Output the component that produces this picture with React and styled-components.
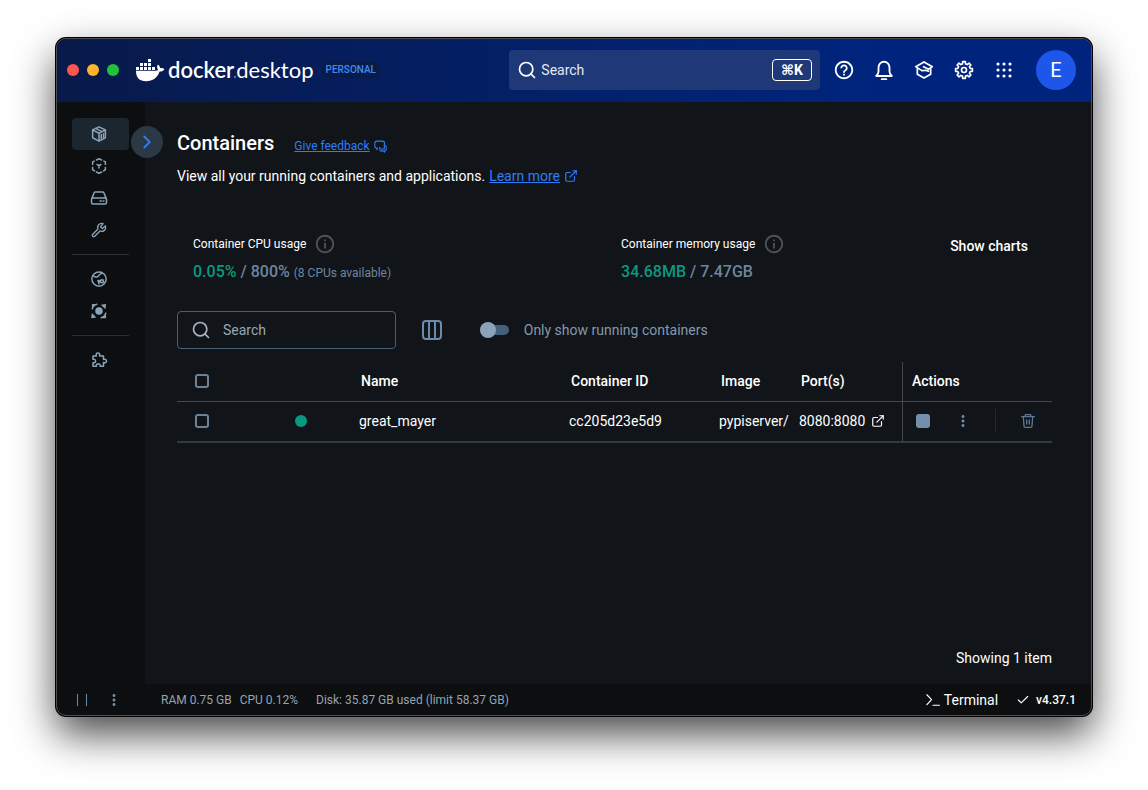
import React from 'react'
import { useState } from 'react'
import styled, { createGlobalStyle } from 'styled-components'
import { Search, Wrench, Check, ChevronRight, ExternalLink } from 'lucide-react'
import { MdHelpOutline, MdInfoOutline, MdMoreVert } from 'react-icons/md'

const containers = [
    { name: 'great_mayer', id: 'cc205d23e5d9', image: 'pypiserver/', ports: '8080:8080' },
]

function Icon(props){
    return(
        <Svg viewBox = '0 0 24 24' $size = {props.size || 18} $color = {props.color} aria-hidden = 'true'>
            {props.children}
        </Svg>
    )
}

function Whale(){
    return(
        <WhaleSvg viewBox = '0 0 29 23' aria-hidden = 'true'>
            <path d = 'M12 0h3v3h-3zM4 4h3v3H4zM8 4h3v3H8zM12 4h3v3h-3zM0 8h3v3H0zM4 8h3v3H4zM8 8h3v3H8zM12 8h3v3h-3zM16 8h3v3h-3z' />
            <path d = 'M0 11.7h19.6c1 0 1.9-.3 2.5-.8-1.3-1.8-1.3-3.7-.2-5.5 1.3.9 2 2.1 2.2 3.6 1.6-.3 3.1 0 4.3 1-.9 1.9-2.5 2.7-4.8 2.6C21.3 18.8 17 22.3 10 22.3 3.3 22.3-.1 18.6 0 11.7z' />
        </WhaleSvg>
    )
}

function BellIcon(){
    return(
        <Icon size = {22}>
            <path d = 'M3.5 18.5h17c-1.5-1.5-2.5-3-2.5-5V9.500a6 6.500 0 0 0-12 0v4c0 2-1 3.500-2.500 5z' />
            <path d = 'M9.5 22h5' />
        </Icon>
    )
}

function LearnIcon(){
    return(
        <Icon size = {20}>
            <path d = 'M12 2.500L2 8l7 4.500c3.500 1 4-1.500 8.500 1' />
            <path d = 'M12 2.500L22 8l-4.500 3L11.500 8M4 10v7l8 4.500 8-4.500v-7' />
        </Icon>
    )
}

// eight rounded teeth around a small hub
function GearIcon(){
    const points = []
    for (let i = 0; i < 8; i++){
        [[-14, 7.6], [-9, 10.2], [9, 10.2], [14, 7.6]].forEach(([turn, radius]) => {
            const angle = (i * 45 + turn) * Math.PI / 180
            points.push((12 + radius * Math.sin(angle)).toFixed(2) + ' ' + (12 - radius * Math.cos(angle)).toFixed(2))
        })
    }

    return(
        <Icon size = {20}>
            <path d = {'M' + points.join('L') + 'z'} />
            <circle cx = '12' cy = '12' r = '3' />
        </Icon>
    )
}

function GridIcon(){
    const steps = [4, 12, 20]
    return(
        <Icon size = {18}>
            {steps.map(y => steps.map(x => (
                <circle key = {x + '-' + y} cx = {x} cy = {y} r = '2.1' fill = 'currentColor' stroke = 'none' />
            )))}
        </Icon>
    )
}

function ContainerIcon(){
    return(
        <Icon>
            <path d = 'M12 2.5l8.5 4v10.500L12 21.500l-8.500-4.500V6.500zM3.500 6.500L12 11l8.500-4.500M12 11v10.500M7.500 4.500l8.500 4.300' />
            <path d = 'M15 13v5M18 11.500v5' />
        </Icon>
    )
}

function ImageIcon(){
    return(
        <Icon>
            <path d = 'M8.500 4L12 2.300 15.500 4M18.500 5.500l2 1V10M20.500 14v3l-2.500 1.500M15.500 20L12 21.700 8.500 20M6 18.500L3.500 17v-3M3.500 10V6.500l2-1' />
            <path d = 'M9.500 10l2.500 1.500 2.500-1.500M12 11.500v3' />
        </Icon>
    )
}

function VolumeIcon(){
    return(
        <Icon>
            <path d = 'M2.500 12.500l3-7.500c.3-.6.7-1 1.500-1h10c.8 0 1.200.4 1.500 1l3 7.500' />
            <rect x = '2' y = '12' width = '20' height = '8' rx = '2' />
            <path d = 'M13.500 16h1.500M17.500 16h1' />
        </Icon>
    )
}

function HubIcon(){
    return(
        <Icon>
            <circle cx = '12' cy = '12' r = '9.500' />
            <path d = 'M4 7.500c2 1.500 3.500 2.500 6 1.500s1.500-3 4-3.500.5-2 .5-2.500' />
            <path d = 'M10.500 14.500c1-1 2.500-.5 2.500 1l-1.500.5.5 2.500M16 13a2 2 0 1 1 0 4 2 2 0 0 1 0-4' />
        </Icon>
    )
}

function ScoutIcon(){
    return(
        <Icon>
            <circle cx = '12' cy = '12' r = '5' fill = 'currentColor' stroke = 'none' />
            <path d = 'M3 9c.5-2.500 2.500-5 6-6M21 15c-.5 2.500-2.500 5-6 6' />
            <path d = 'M3.500 5.500v-2h3M20.500 18.500v2h-3' />
            <path d = 'M14.500 3.500L21.500 2.500l-1 7zM2.500 14.500l-1 7 7-1z' fill = 'currentColor' stroke = 'none' />
        </Icon>
    )
}

function ExtensionIcon(){
    return(
        <Icon>
            <path d = 'M4 6.500h4.500c-.8-2.500.3-4 2-4s3 1.500 2.200 4H18v4.700c2.700-.8 4 .5 4 2.200s-1.500 2.800-4 2v5h-4.500c.4-2.300-.8-3.400-2.500-3.400s-3 1.200-2.500 3.400H4v-4.800c2.300.5 3.400-.7 3.400-2.300S6.200 10.500 4 11z' />
        </Icon>
    )
}

function FeedbackIcon(){
    return(
        <Icon size = {13} color = '#2f7df6'>
            <path d = 'M6.500 16l-1 2v-3C2.500 15 1.500 13.500 1.500 11V6c0-2.500 1-4 4-4h10c3 0 4 1.500 4 4v1.500' />
            <path d = 'M19 7v9.500h-8.500v-3M19 10c2.500 0 3.500 1 3.500 2.500v5c0 1.500-1 2.500-3 2.500v2.500L17 20h-6' />
        </Icon>
    )
}

function ColumnsIcon(){
    return(
        <Icon size = {24} color = '#6c8ba8'>
            <rect x = '3' y = '3' width = '18' height = '18' rx = '3' />
            <path d = 'M9 3v18M15 3v18' />
        </Icon>
    )
}

function TrashIcon(){
    return(
        <Icon size = {16} color = '#5b7995'>
            <path d = 'M2.500 5.500h19M8 5V2.500h8V5M5 6l1 13.500c.1 1.200.8 2 2 2h8c1.200 0 1.900-.8 2-2L19 6M10 10.500v6M14 10.500v6' />
        </Icon>
    )
}

function TerminalIcon(){
    return(
        <Icon size = {14}>
            <path d = 'M1.500 3l8 8.500-8 8.500M12 21h11' />
        </Icon>
    )
}

function TitleBar(){
    return(
        <Header>
            <Brand>
                <Lights>
                    <Light $color = '#ff5450' />
                    <Light $color = '#ffb429' />
                    <Light $color = '#24c138' />
                </Lights>
                <Logo>
                    <Whale />
                    <Wordmark><Name>docker</Name><Mark />desktop</Wordmark>
                </Logo>
                <Plan>PERSONAL</Plan>
            </Brand>
            <HeaderSearch>
                <Search size = {20} strokeWidth = {2} />
                <HeaderInput type = 'text' placeholder = 'Search' aria-label = 'Search Docker Desktop' />
                <Shortcut>⌘K</Shortcut>
            </HeaderSearch>
            <Tools>
                <ToolButton aria-label = 'Help'><MdHelpOutline size = {22} /></ToolButton>
                <ToolButton aria-label = 'Notifications'><BellIcon /></ToolButton>
                <ToolButton aria-label = 'Learning center'><LearnIcon /></ToolButton>
                <ToolButton aria-label = 'Settings'><GearIcon /></ToolButton>
                <ToolButton aria-label = 'Apps'><GridIcon /></ToolButton>
            </Tools>
            <Avatar aria-label = 'Account'>E</Avatar>
        </Header>
    )
}

function Sidebar(){
    return(
        <Side>
            <NavLink href = '#containers' $active aria-label = 'Containers'><ContainerIcon /></NavLink>
            <NavLink href = '#images' aria-label = 'Images'><ImageIcon /></NavLink>
            <NavLink href = '#volumes' aria-label = 'Volumes'><VolumeIcon /></NavLink>
            <NavLink href = '#builds' aria-label = 'Builds'><Wrench size = {16} strokeWidth = {2} /></NavLink>
            <Divider />
            <NavLink href = '#hub' aria-label = 'Docker Hub'><HubIcon /></NavLink>
            <NavLink href = '#scout' aria-label = 'Docker Scout'><ScoutIcon /></NavLink>
            <Divider />
            <NavLink href = '#extensions' aria-label = 'Extensions'><ExtensionIcon /></NavLink>
            <Expand aria-label = 'Expand sidebar'><ChevronRight size = {22} strokeWidth = {2} /></Expand>
        </Side>
    )
}

function Usage(){
    return(
        <Stats>
            <div>
                <StatLabel>Container CPU usage <MdInfoOutline size = {22} /></StatLabel>
                <StatValue><Used>0.05%</Used> / 800% <Note>(8 CPUs available)</Note></StatValue>
            </div>
            <div>
                <StatLabel>Container memory usage <MdInfoOutline size = {22} /></StatLabel>
                <StatValue><Used>34.68MB</Used> / 7.47GB</StatValue>
            </div>
            <ChartsButton>Show charts</ChartsButton>
        </Stats>
    )
}

function ContainerTable(){
    return(
        <Table>
            <colgroup>
                <Col $width = {74} />
                <Col $width = {100} />
                <col />
                <Col $width = {150} />
                <Col $width = {80} />
                <Col $width = {111} />
                <Col $width = {150} />
            </colgroup>
            <thead>
                <tr>
                    <Th><Tick type = 'checkbox' aria-label = 'Select all containers' /></Th>
                    <Th aria-label = 'Status' />
                    <Th>Name</Th>
                    <Th>Container ID</Th>
                    <Th>Image</Th>
                    <Th>Port(s)</Th>
                    <Th $divided>Actions</Th>
                </tr>
            </thead>
            <tbody>
                {containers.map(item => (
                    <tr key = {item.id}>
                        <Td><Tick type = 'checkbox' aria-label = {'Select ' + item.name} /></Td>
                        <Td><Status title = 'Running' /></Td>
                        <Td>{item.name}</Td>
                        <Td>{item.id}</Td>
                        <Td>{item.image}</Td>
                        <Td><Port href = '#port'>{item.ports} <ExternalLink size = {14} strokeWidth = {2} /></Port></Td>
                        <Td $divided>
                            <Actions>
                                <RowButton aria-label = 'Stop'><StopSquare /></RowButton>
                                <RowButton aria-label = 'More'><MdMoreVert size = {18} /></RowButton>
                                <Rule />
                                <RowButton aria-label = 'Delete'><TrashIcon /></RowButton>
                            </Actions>
                        </Td>
                    </tr>
                ))}
            </tbody>
        </Table>
    )
}

function StatusBar(){
    return(
        <Footer>
            <EngineControls>
                <FooterButton aria-label = 'Pause engine'><PauseBars /></FooterButton>
                <FooterButton aria-label = 'Engine menu'><MdMoreVert size = {18} /></FooterButton>
            </EngineControls>
            <Resources>
                <span>RAM 0.75 GB</span>
                <span>CPU 0.12%</span>
            </Resources>
            <Disk>Disk: 35.87 GB used (limit 58.37 GB)</Disk>
            <TerminalButton><TerminalIcon />Terminal</TerminalButton>
            <Version><Check size = {14} strokeWidth = {2} />v4.37.1</Version>
        </Footer>
    )
}

export default function App(){
    const [running, setRunning] = useState(false)

    return(
        <>
            <GlobalStyle />
            <Window>
                <TitleBar />
                <Body>
                    <Sidebar />
                    <Main>
                        <Heading>
                            <Title>Containers</Title>
                            <Feedback href = '#feedback'><u>Give feedback</u><FeedbackIcon /></Feedback>
                        </Heading>
                        <Intro>
                            View all your running containers and applications.
                            <Learn href = '#docs'><u>Learn more</u><ExternalLink size = {14} strokeWidth = {2} /></Learn>
                        </Intro>
                        <Usage />
                        <Filters>
                            <SearchBox>
                                <Search size = {20} strokeWidth = {2} />
                                <SearchInput type = 'text' placeholder = 'Search' aria-label = 'Search containers' />
                            </SearchBox>
                            <ColumnsButton aria-label = 'Choose columns'><ColumnsIcon /></ColumnsButton>
                            <SwitchLabel>
                                <Switch type = 'checkbox' checked = {running} onChange = {() => setRunning(!running)} />
                                Only show running containers
                            </SwitchLabel>
                        </Filters>
                        <ContainerTable />
                        <Count>Showing 1 item</Count>
                    </Main>
                </Body>
                <StatusBar />
            </Window>
        </>
    )
}

const GlobalStyle = createGlobalStyle`
    * {
        box-sizing: border-box;
    }

    body {
        margin: 0;
        background: #ffffff;
        color: #ffffff;
        font-family: Roboto, 'DejaVu Sans', sans-serif;
        font-size: 14px;
        line-height: 20px;
    }

    button {
        display: flex;
        align-items: center;
        justify-content: center;
        padding: 0;
        border: 0;
        background: none;
        color: inherit;
        font: inherit;
        cursor: pointer;
    }

    a {
        color: inherit;
        text-decoration: none;
    }

    svg {
        flex: none;
    }
`

const Svg = styled.svg`
    display: block;
    width: ${props => props.$size}px;
    height: ${props => props.$size}px;
    color: ${props => props.$color || 'inherit'};
    fill: none;
    stroke: currentColor;
    stroke-width: 2;
    stroke-linecap: round;
    stroke-linejoin: round;
`

const Window = styled.div`
    display: flex;
    flex-direction: column;
    min-height: calc(100vh - 112px);
    margin: 38px 56px 74px;
    border: 1px solid #4c4e51;
    border-radius: 10px;
    background: #0c0e10;
    box-shadow: 0 0 0 1px #000000, 0 18px 40px rgba(0, 0, 0, 0.72);
`

const Header = styled.header`
    display: flex;
    align-items: center;
    height: 63px;
    padding: 0 15px 1px 10px;
    border-radius: 9px 9px 0 0;
    background: linear-gradient(90deg, #081a4a, #00247e 80%);
`

const Brand = styled.div`
    display: flex;
    flex: 1;
    align-items: center;
`

const Lights = styled.div`
    display: flex;
    gap: 8px;
`

const Light = styled.span`
    width: 12px;
    height: 12px;
    border-radius: 50%;
    background: ${props => props.$color};
`

const Logo = styled.div`
    display: flex;
    align-items: center;
    gap: 3px;
    margin-left: 17px;
`

const WhaleSvg = styled.svg`
    width: 29px;
    height: 23px;
    fill: #ffffff;
`

const Wordmark = styled.span`
    display: flex;
    align-items: baseline;
    font-family: Lato, sans-serif;
    font-size: 22px;
    font-weight: 400;
    line-height: 24px;
`

const Name = styled.span`
    font-weight: 600;
`

const Mark = styled.span`
    width: 2px;
    height: 2px;
    border-radius: 50%;
    background: #7f8bb0;
`

const Plan = styled.span`
    margin-left: 8px;
    padding: 0 4px;
    border-radius: 8px;
    background: #0a1b45;
    color: #3d8bf5;
    font-size: 10px;
    font-weight: 500;
    line-height: 16px;
`

const HeaderSearch = styled.div`
    display: flex;
    flex: 0 0 calc(30% + 8px);
    align-items: center;
    gap: 2px;
    height: 40px;
    margin-right: 4px;
    padding: 0 8px;
    border-radius: 4px;
    background: #1e3878;
`

const HeaderInput = styled.input`
    flex: 1;
    min-width: 0;
    border: 0;
    outline: 0;
    background: none;
    color: #ffffff;
    font: inherit;

    &::placeholder {
        color: #e4e8f1;
    }
`

const Shortcut = styled.kbd`
    width: 40px;
    border: 1px solid #ffffff;
    border-radius: 4px;
    font-family: Roboto, 'DejaVu Sans', sans-serif;
    font-size: 14px;
    font-weight: 700;
    line-height: 20px;
    text-align: center;
`

const Tools = styled.div`
    display: flex;
    margin-right: 12px;
`

const ToolButton = styled.button`
    width: 40px;
    height: 40px;
`

const Avatar = styled.button`
    width: 40px;
    height: 40px;
    border-radius: 50%;
    background: #1d56e8;
    font-size: 20px;
`

const Body = styled.div`
    display: flex;
    flex: 1;
`

const Side = styled.nav`
    position: relative;
    flex: none;
    width: 88px;
    padding: 16px 16px 0 15px;
`

const NavLink = styled.a`
    display: flex;
    align-items: center;
    justify-content: center;
    height: 32px;
    padding-right: 4px;
    border-radius: 4px;
    background: ${props => props.$active ? '#1c262e' : 'none'};
    color: #8ba3b8;
`

const Divider = styled.hr`
    height: 1px;
    margin: 8px 0;
    border: 0;
    background: #2b2e31;
`

const Expand = styled.button`
    position: absolute;
    top: 24px;
    right: -18px;
    width: 32px;
    height: 32px;
    border-radius: 50%;
    background: #2a3945;
    color: #2f7df6;
`

const Main = styled.main`
    display: flex;
    flex: 1;
    flex-direction: column;
    min-width: 0;
    padding: 27px 39px 16px 32px;
    background: #111418;
`

const Heading = styled.div`
    display: flex;
    align-items: baseline;
    gap: 20px;
`

const Title = styled.h1`
    margin: 0;
    font-size: 20px;
    font-weight: 500;
    line-height: 28px;
`

const Feedback = styled.a`
    display: flex;
    align-items: center;
    gap: 4px;
    color: #2f7df6;
    font-size: 12px;
`

const Intro = styled.p`
    display: flex;
    gap: 4px;
    margin: 9px 0 0;
`

const Learn = styled.a`
    display: flex;
    align-items: center;
    gap: 4px;
    color: #2f7df6;
`

const Stats = styled.section`
    display: grid;
    grid-template-columns: 4fr 3fr auto;
    margin-top: 46px;
    padding: 0 16px;
`

const StatLabel = styled.div`
    display: flex;
    align-items: center;
    gap: 8px;
    height: 24px;
    font-size: 12px;

    svg {
        color: #505356;
    }
`

const StatValue = styled.div`
    margin-top: 4px;
    color: #6c86a0;
    font-size: 16px;
    font-weight: 500;
    line-height: 24px;
`

const Used = styled.span`
    color: #089a80;
`

const Note = styled.span`
    font-size: 12px;
    font-weight: 400;
`

const ChartsButton = styled.button`
    height: 28px;
    padding: 0 8px;
    font-weight: 500;
`

const Filters = styled.div`
    display: flex;
    align-items: center;
    margin-top: 25px;
`

const SearchBox = styled.div`
    display: flex;
    align-items: center;
    gap: 10px;
    width: 25%;
    height: 38px;
    padding: 0 13px;
    border: 1px solid #446079;
    border-radius: 4px;
    color: #a5b4c1;
`

const SearchInput = styled.input`
    flex: 1;
    min-width: 0;
    border: 0;
    outline: 0;
    background: none;
    color: #ffffff;
    font: inherit;

    &::placeholder {
        color: #97a8b7;
    }
`

const ColumnsButton = styled.button`
    width: 40px;
    height: 40px;
    margin: 0 28px 0 16px;
`

const SwitchLabel = styled.label`
    display: flex;
    align-items: center;
    gap: 15px;
    color: #8499ac;
`

const Switch = styled.input`
    appearance: none;
    display: flex;
    align-items: center;
    justify-content: ${props => props.checked ? 'flex-end' : 'flex-start'};
    width: 29px;
    height: 10px;
    margin: 0;
    border-radius: 5px;
    background: #456078;

    &::before {
        content: '';
        flex: none;
        width: 16px;
        height: 16px;
        border-radius: 50%;
        background: #8ba3b8;
    }
`

const Table = styled.table`
    width: 100%;
    margin-top: 12px;
    border-collapse: separate;
    border-spacing: 0;
    table-layout: fixed;
`

const Col = styled.col`
    width: ${props => props.$width}px;
`

const Th = styled.th`
    height: 40px;
    padding: 0 0 2px ${props => props.$divided ? 9 : 10}px;
    border-bottom: 1px solid #45484b;
    border-left: ${props => props.$divided ? '1px solid #45484b' : '0'};
    font-weight: 500;
    text-align: left;

    &:first-child {
        padding-left: 18px;
    }
`

const Td = styled.td`
    height: 41px;
    padding: 0 0 2px 8px;
    border-bottom: 2px solid #303b44;
    border-left: ${props => props.$divided ? '1px solid #45484b' : '0'};
    overflow: hidden;
    white-space: nowrap;

    &:first-child {
        padding-left: 18px;
    }

    &:nth-child(2) {
        padding-left: 0;
    }

    &:last-child {
        padding-left: 0;
    }
`

const Tick = styled.input`
    appearance: none;
    display: block;
    width: 14px;
    height: 14px;
    margin: 0;
    border: 2px solid #6c8299;
    border-radius: 3px;

    &:checked {
        background: #2f7df6;
    }
`

const Status = styled.div`
    width: 12px;
    height: 12px;
    margin: 0 auto;
    border-radius: 50%;
    background: #089a80;
`

const Port = styled.a`
    display: flex;
    align-items: center;
    gap: 6px;
`

const Actions = styled.div`
    display: flex;
    align-items: center;
    color: #6c8ba8;
`

const RowButton = styled.button`
    width: 40px;
    height: 32px;
`

const StopSquare = styled.span`
    width: 14px;
    height: 14px;
    border-radius: 3px;
    background: #7290ab;
`

const Rule = styled.span`
    width: 1px;
    height: 24px;
    margin: 0 12px;
    background: #25292d;
`

const Count = styled.div`
    margin-top: auto;
    text-align: right;
`

const Footer = styled.footer`
    display: flex;
    align-items: center;
    height: 31px;
    padding-right: 15px;
    border-radius: 0 0 9px 9px;
    color: #94a4b1;
    font-size: 12px;
`

const EngineControls = styled.div`
    display: flex;
    width: 104px;
    padding-left: 9px;
    color: #6c8ba8;
`

const FooterButton = styled.button`
    width: 32px;
    height: 24px;
`

const PauseBars = styled.span`
    width: 10px;
    height: 12px;
    border-right: 1px solid #6c8ba8;
    border-left: 1px solid #6c8ba8;
`

const Resources = styled.div`
    display: flex;
    gap: 8px;
`

const Disk = styled.span`
    flex: 1;
    margin-left: 18px;
`

const TerminalButton = styled.button`
    gap: 4px;
    color: #ffffff;
    font-size: 14px;
`

const Version = styled.span`
    display: flex;
    align-items: center;
    gap: 6px;
    margin-left: 18px;
    color: #ffffff;
    font-weight: 500;
`
